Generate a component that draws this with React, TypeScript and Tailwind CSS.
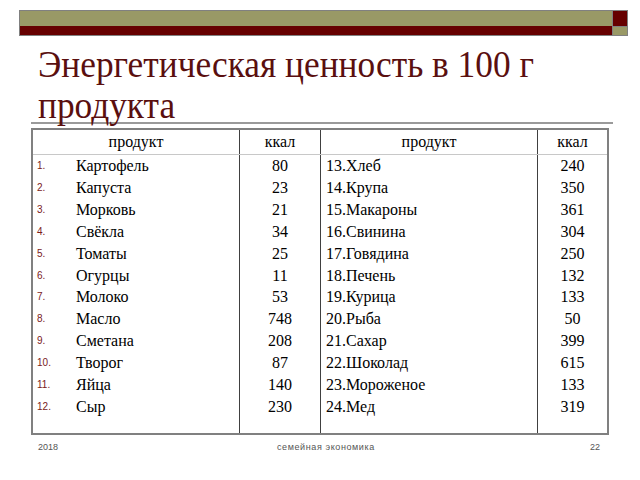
import React from "react";

const left = [
  ["Картофель", "80"],
  ["Капуста", "23"],
  ["Морковь", "21"],
  ["Свёкла", "34"],
  ["Томаты", "25"],
  ["Огурцы", "11"],
  ["Молоко", "53"],
  ["Масло", "748"],
  ["Сметана", "208"],
  ["Творог", "87"],
  ["Яйца", "140"],
  ["Сыр", "230"],
];

const right = [
  ["13.Хлеб", "240"],
  ["14.Крупа", "350"],
  ["15.Макароны", "361"],
  ["16.Свинина", "304"],
  ["17.Говядина", "250"],
  ["18.Печень", "132"],
  ["19.Курица", "133"],
  ["20.Рыба", "50"],
  ["21.Сахар", "399"],
  ["22.Шоколад", "615"],
  ["23.Мороженое", "133"],
  ["24.Мед", "319"],
];

export default function App() {
  return (
    <div className="w-[640px] h-[480px] bg-white overflow-hidden flex flex-col font-['Liberation_Serif',serif] text-black">
      {/* top bar */}
      <div className="ml-[19px] mt-[10px] flex h-[26px] w-[609px] border border-[#808080]">
        <div className="flex w-[592px] flex-col">
          <div className="h-[15px] bg-[#999966]" />
          <div className="h-[9px] bg-[#660000]" />
        </div>
        <div className="flex flex-1 flex-col border-l border-[#808080]">
          <div className="h-[15px] bg-[#660000]" />
          <div className="h-[9px] border-t border-[#808080] bg-[#999966]" />
        </div>
      </div>

      {/* title */}
      <div className="ml-[38px] mt-[8px] h-[82px] origin-left scale-x-[0.955] text-[37px] leading-[41px] text-[#5a0f0f] whitespace-nowrap">
        <div>Энергетическая ценность в 100 г</div>
        <div>продукта</div>
      </div>

      <div className="ml-[31px] -mt-[4px] h-[2px] w-[582px] bg-[#9a9a9a]" />

      {/* table */}
      <div className="ml-[31px] mt-[4px] w-[578px] h-[307px] border-2 border-[#808080] flex flex-col text-[16px]">
        <div className="grid grid-cols-[207px_81px_217px_1fr] h-[25px] border-b border-[#c8c8c8]">
          <div className="flex items-center justify-center border-r border-[#404040]">продукт</div>
          <div className="flex items-center justify-center border-r border-[#404040]">ккал</div>
          <div className="flex items-center justify-center border-r border-[#404040]">продукт</div>
          <div className="flex items-center justify-center">ккал</div>
        </div>
        <div className="grid flex-1 grid-cols-[207px_81px_217px_1fr] leading-[21.9px]">
          <div className="border-r border-[#404040]">
            {left.map(([name], i) => (
              <div key={name} className="flex items-center">
                <span className="w-[43px] pl-[4px] font-['Liberation_Sans',sans-serif] text-[10px] text-[#7a1a1a]">
                  {i + 1}.
                </span>
                <span>{name}</span>
              </div>
            ))}
          </div>
          <div className="border-r border-[#404040] text-center">
            {left.map(([name, v]) => (
              <div key={name}>{v}</div>
            ))}
          </div>
          <div className="border-r border-[#404040] pl-[5px]">
            {right.map(([name]) => (
              <div key={name}>{name}</div>
            ))}
          </div>
          <div className="text-center">
            {right.map(([name, v]) => (
              <div key={name}>{v}</div>
            ))}
          </div>
        </div>
      </div>

      {/* footer */}
      <div className="mt-[5px] h-[14px] font-['Liberation_Sans',sans-serif] text-[9px] text-[#555] leading-[14px]">
        <div className="flex items-center">
          <span className="ml-[38px] w-[40px]">2018</span>
          <span className="ml-[199px] tracking-[0.6px]">семейная экономика</span>
          <span className="ml-auto mr-[40px]">22</span>
        </div>
      </div>
    </div>
  );
}
